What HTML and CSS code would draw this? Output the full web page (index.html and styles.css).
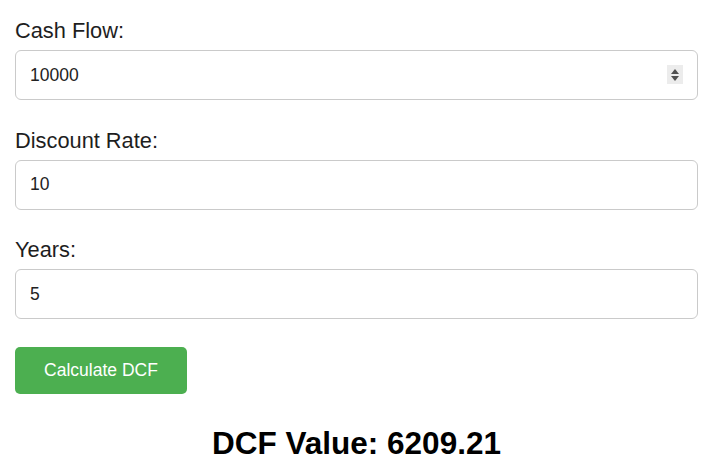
FILE: index.html
```html
<!DOCTYPE html>
<html lang="en">

<head>
  <title>DCF Calculator</title>
  <link rel="stylesheet" href="styles.css">
</head>

<body>
  <div id="calculator">
    <label for="cashFlow">Cash Flow:</label>
    <div class="field">
      <input type="number" id="cashFlow" value="10000">
      <!-- hover spinner of the number field -->
      <span class="spinner">
        <svg width="16" height="19" viewBox="0 0 16 19">
          <path d="M8 4 L12 9 L4 9 Z" fill="#505050" />
          <path d="M4 11 L12 11 L8 16 Z" fill="#505050" />
        </svg>
      </span>
    </div>

    <label for="discountRate">Discount Rate:</label>
    <div class="field">
      <input type="number" id="discountRate" value="10">
    </div>

    <label for="years">Years:</label>
    <div class="field">
      <input type="number" id="years" value="5">
    </div>

    <button onclick="calculateDCF()">Calculate DCF</button>

    <h2 id="result">DCF Value: 6209.21</h2>
  </div>

  <script>
    function calculateDCF() {
      const cashFlow = parseFloat(document.getElementById("cashFlow").value);
      const rate = parseFloat(document.getElementById("discountRate").value) / 100;
      const years = parseInt(document.getElementById("years").value);
      const dcf = cashFlow / Math.pow(1 + rate, years);
      document.getElementById("result").textContent = "DCF Value: " + dcf.toFixed(2);
    }
  </script>
</body>

</html>
```

FILE: styles.css
```css
html,
body {
  margin: 0;
  background: white;
}

body {
  font-family: "Liberation Sans", Arial, sans-serif;
}

#calculator {
  padding: 18px 18px 0 15px;
}

#calculator label {
  display: block;
  font-size: 21.8px;
  line-height: 25px;
  color: #1e1e1e;
  margin-bottom: 7px;
}

.field {
  position: relative;
  margin-bottom: 27.5px;
}

.field input {
  display: block;
  box-sizing: border-box;
  width: 100%;
  height: 50px;
  padding: 0 14px;
  border: 1px solid #cacaca;
  border-radius: 6px;
  font-family: inherit;
  font-size: 17.5px;
  color: #222;
  background: white;
  outline: none;
  -moz-appearance: textfield;
}

.field input::-webkit-inner-spin-button,
.field input::-webkit-outer-spin-button {
  -webkit-appearance: none;
  margin: 0;
}

.spinner {
  position: absolute;
  right: 15px;
  top: 15px;
  width: 16px;
  height: 19px;
  background: #ececec;
  display: flex;
}

button {
  display: block;
  width: 172px;
  height: 47px;
  border: none;
  border-radius: 5px;
  background: #4caf50;
  color: white;
  font-family: inherit;
  font-size: 17.5px;
  cursor: pointer;
}

#result {
  margin: 31px 0 0;
  text-align: center;
  font-size: 31.5px;
  line-height: 36px;
  font-weight: bold;
  color: #000;
}
```
